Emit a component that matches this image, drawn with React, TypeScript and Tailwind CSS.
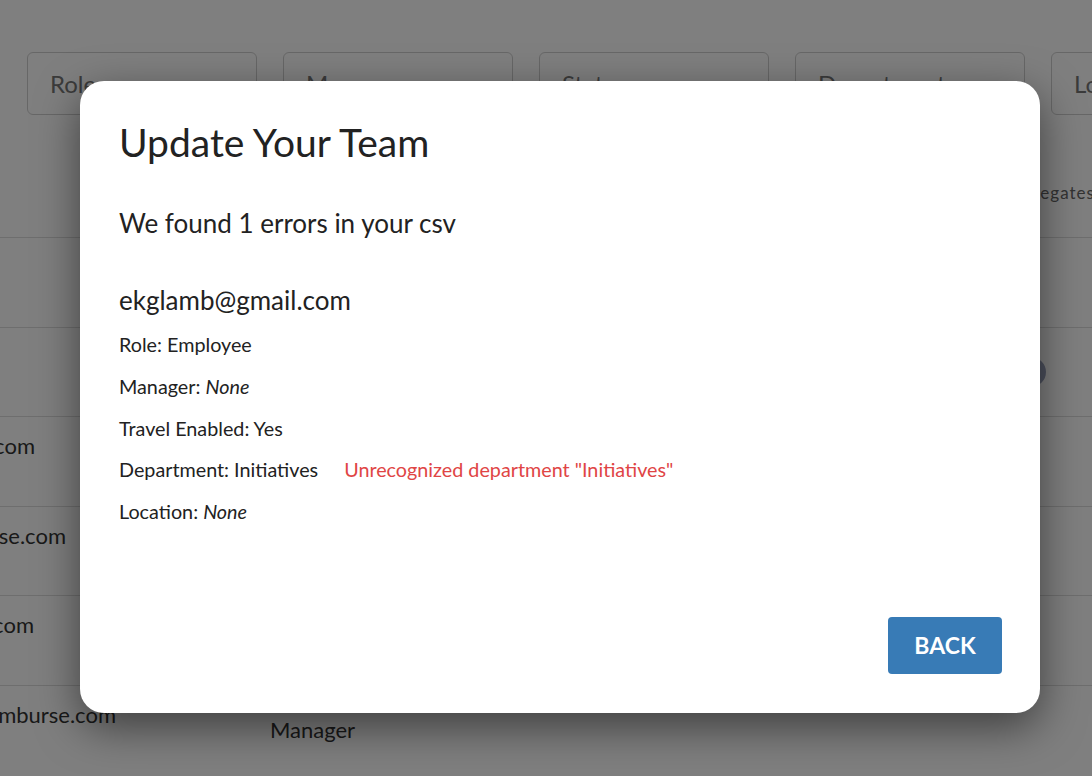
import React from "react";

const filters = ["Role", "Manager", "Status", "Department", "Location"];

const rows = [
  { email: "", role: "", pad: "pr-[235px]" },
  { email: "", role: "", pad: "pr-[235px]", badge: true },
  { email: "priya.n@reimburse.com", role: "", pad: "pr-[235px]" },
  { email: "sam.whitfield@reimburse.com", role: "", pad: "pr-[204px]" },
  { email: "kai.long@reimburse.com", role: "", pad: "pr-[236px]" },
  { email: "daniel.ortiz@reimburse.com", role: "Manager", pad: "pr-[154px]" },
];

function Field({ label, children }: { label: string; children: React.ReactNode }) {
  return (
    <p className="text-[19.75px] leading-[24px] text-[#222]">
      {label}: {children}
    </p>
  );
}

export default function App() {
  return (
    <div className="relative h-[776px] w-full overflow-hidden bg-white font-['Lato','Liberation_Sans',sans-serif]">
      {/* page behind the modal */}
      <div className="flex gap-[26px] pl-[27px] pt-[52px]">
        {filters.map((f) => (
          <div
            key={f}
            className="flex h-[63px] w-[230px] shrink-0 items-center rounded-md border border-[#cfcfcf] px-[22px] text-[24px] text-[#777]"
          >
            {f}
          </div>
        ))}
      </div>
      <div className="-mr-[3px] flex h-[122px] items-end justify-end pb-[32px]">
        <span className="text-[17px] tracking-[0.06em] text-[#666]">Delegates</span>
      </div>
      <div>
        {rows.map((r, i) => (
          <div key={i} className="flex h-[89.5px] items-start border-t border-[#dcdcdc]">
            <div className={`ml-[-230px] w-[500px] shrink-0 pt-[12px] text-right text-[22px] text-[#333] ${r.pad}`}>
              {r.email}
            </div>
            <div className="w-[200px] pt-[27px] text-[22px] text-[#333]">{r.role}</div>
            <div className="flex flex-1 justify-end pr-[46px] pt-[29px]">
              {r.badge && <div className="h-[30px] w-[40px] rounded-full bg-[#9aa2bd]" />}
            </div>
          </div>
        ))}
      </div>

      {/* overlay */}
      <div className="absolute inset-0 bg-black/50 pl-[80px] pt-[81px]">
        <div className="flex h-[632px] w-[960px] flex-col rounded-[24px] bg-white pb-[39px] pl-[39px] pr-[38px] pt-[38px] shadow-[0_14px_44px_rgba(0,0,0,0.5)]">
          <h1 className="text-[39px] leading-[46px] text-[#222]">Update Your Team</h1>
          <p className="mt-[42px] text-[26px] leading-[32px] text-[#222]">We found 1 errors in your csv</p>

          <p className="mt-[45px] text-[26px] leading-[32px] text-[#222]">ekglamb@gmail.com</p>
          <div className="mt-[17px] flex flex-col gap-[17.75px]">
            <Field label="Role">Employee</Field>
            <Field label="Manager">
              <i>None</i>
            </Field>
            <Field label="Travel Enabled">Yes</Field>
            <div className="flex gap-[26px] text-[19.75px] leading-[24px]">
              <span className="text-[#222]">Department: Initiatives</span>
              <span className="text-[#e04545]">Unrecognized department "Initiatives"</span>
            </div>
            <Field label="Location">
              <i>None</i>
            </Field>
          </div>

          <div className="mt-auto flex justify-end">
            <button className="h-[57px] w-[114px] rounded-[4px] bg-[#387bb6] text-[23px] font-bold text-white">
              BACK
            </button>
          </div>
        </div>
      </div>
    </div>
  );
}
